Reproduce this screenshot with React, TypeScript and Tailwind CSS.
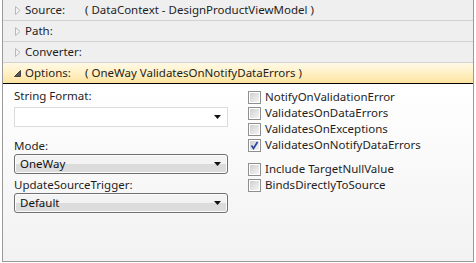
import type { ReactNode } from "react";

function Collapsed() {
  return (
    <svg width="6" height="9" viewBox="0 0 6 9" className="shrink-0">
      <path d="M0.5 0.5 L5 4.5 L0.5 8.5 Z" fill="#f4f4f4" stroke="#b8b8b8" strokeWidth="1" />
    </svg>
  );
}

function Expanded() {
  return (
    <svg width="7" height="7" viewBox="0 0 7 7" className="shrink-0">
      <path d="M6.5 0.5 L6.5 6.5 L0.5 6.5 Z" fill="#555" stroke="#444" strokeWidth="1" />
    </svg>
  );
}

function HeaderRow({ label, value, open = false }: { label: string; value?: string; open?: boolean }) {
  const bg = open
    ? "bg-gradient-to-b from-[#fff9e6] via-[#fff0c4] to-[#fde3a0] border-b-black"
    : "bg-[#efefef] border-b-[#d2d2d2]";
  return (
    <div className={`flex h-[21px] items-center border-b ${bg}`}>
      <div className="flex w-[22px] justify-end pr-[4px]">{open ? <Expanded /> : <Collapsed />}</div>
      <span className="w-[60px] text-[#1e1e1e]">{label}</span>
      {value ? <span className="text-[#1e1e1e]">{value}</span> : null}
    </div>
  );
}

function Arrow() {
  return (
    <svg width="7" height="4" viewBox="0 0 7 4" className="absolute right-[6px] top-1/2 -translate-y-1/2">
      <path d="M0 0 L7 0 L3.5 4 Z" fill="#111" />
    </svg>
  );
}

function Combo({ value, editable = false }: { value?: string; editable?: boolean }) {
  if (editable) {
    return (
      <div className="relative h-[20px] w-[214px] border border-[#dcdcdc] bg-white">
        <Arrow />
      </div>
    );
  }
  return (
    <div className="relative flex h-[20px] w-[214px] items-center rounded-[3px] border border-[#707070] bg-gradient-to-b from-[#f3f3f3] from-50% to-[#dcdcdc] to-50% pl-[5px] shadow-[inset_0_0_0_1px_#fcfcfc]">
      <span className="text-[#111]">{value}</span>
      <Arrow />
    </div>
  );
}

function Check({ label, checked = false }: { label: string; checked?: boolean }) {
  return (
    <div className="flex h-[16px] items-center gap-[4px]">
      <div className="flex h-[13px] w-[13px] items-center justify-center border border-[#8e8f8f] bg-white p-[1px]">
        <div className="relative h-full w-full bg-gradient-to-br from-[#cfcfcf] to-[#f5f5f5]">
          {checked ? (
            <svg width="9" height="9" viewBox="0 0 9 9" className="absolute left-0 top-0">
              <path d="M1.5 4.5 L3.5 7.5 L7.5 1" fill="none" stroke="#2a3ea0" strokeWidth="1.6" />
            </svg>
          ) : null}
        </div>
      </div>
      <span className="text-[#1e1e1e]">{label}</span>
    </div>
  );
}

function Field({ label, children }: { label: string; children: ReactNode }) {
  return (
    <div className="flex flex-col">
      <span className="h-[17px] leading-[17px] text-[#1e1e1e]">{label}</span>
      {children}
    </div>
  );
}

export default function App() {
  return (
    <div className="h-[263px] w-[476px] bg-white font-['Noto_Sans',sans-serif] text-[11.5px] leading-none">
      <div className="ml-[2px] flex h-[262px] w-[472px] flex-col border-x border-b border-[#9a9a9a]">
        <HeaderRow label="Source:" value="( DataContext - DesignProductViewModel )" />
        <HeaderRow label="Path:" />
        <HeaderRow label="Converter:" />
        <HeaderRow label="Options:" value="( OneWay ValidatesOnNotifyDataErrors )" open />
        <div className="flex flex-1 bg-gradient-to-b from-white to-[#f2f2f2] pl-[11px] pt-[3px]">
          <div className="flex w-[234px] flex-col">
            <Field label="String Format:">
              <div className="mt-[3px]">
                <Combo editable />
              </div>
            </Field>
            <div className="mt-[10px]">
              <Field label="Mode:">
                <Combo value="OneWay" />
              </Field>
            </div>
            <div className="mt-[2px]">
              <Field label="UpdateSourceTrigger:">
                <Combo value="Default" />
              </Field>
            </div>
          </div>
          <div className="flex flex-col pt-[2px]">
            <Check label="NotifyOnValidationError" />
            <Check label="ValidatesOnDataErrors" />
            <Check label="ValidatesOnExceptions" />
            <Check label="ValidatesOnNotifyDataErrors" checked />
            <div className="h-[8px]" />
            <Check label="Include TargetNullValue" />
            <Check label="BindsDirectlyToSource" />
          </div>
        </div>
      </div>
    </div>
  );
}
